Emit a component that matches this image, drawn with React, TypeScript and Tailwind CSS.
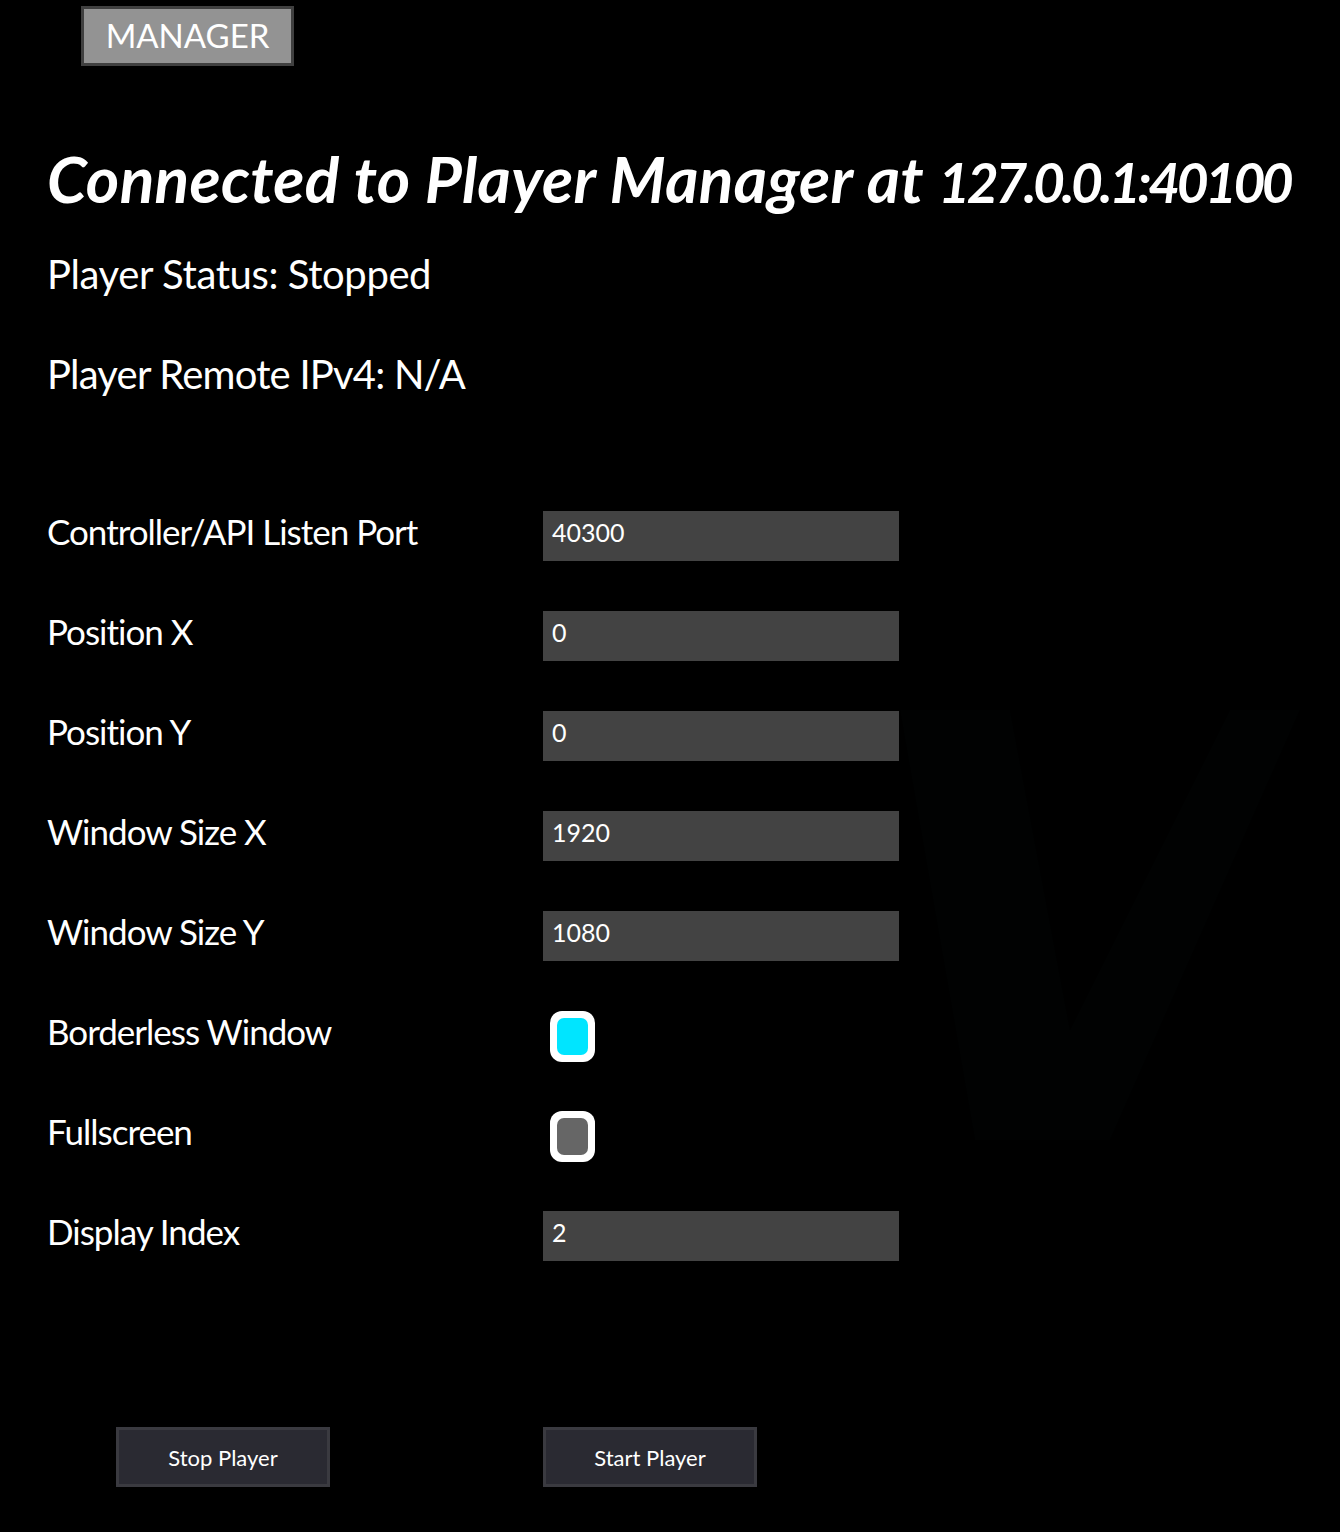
import React from "react";

const FONT = { fontFamily: 'Lato, "Noto Sans", sans-serif' };

function Field({ label, value }: { label: string; value: string }) {
  return (
    <div className="flex items-center h-[50px]">
      <div className="w-[496px] text-[35px] leading-[40px] mb-[10px] tracking-[-1px] text-white">{label}</div>
      <div className="w-[356px] h-[50px] bg-[#434343] flex items-center pl-[9px] pb-[7px] text-[25px] text-white">{value}</div>
    </div>
  );
}

function Check({ label, on }: { label: string; on: boolean }) {
  return (
    <div className="flex items-center h-[50px]">
      <div className="w-[503px] text-[35px] leading-[40px] mb-[10px] tracking-[-1px] text-white">{label}</div>
      <div className="w-[45px] h-[51px] rounded-[12px] bg-white p-[7px]">
        <div className={on ? "w-full h-full rounded-[7px] bg-[#00e5ff]" : "w-full h-full rounded-[7px] bg-[#666666]"} />
      </div>
    </div>
  );
}

export default function App() {
  return (
    <div className="relative w-full min-h-[1532px] bg-black overflow-hidden" style={FONT}>
      <svg className="absolute left-[880px] top-[700px]" width="460" height="460" viewBox="0 0 460 460">
        <polygon points="20,10 130,10 190,330 350,10 420,10 230,440 95,440" fill="#010202" />
      </svg>
      <div className="relative">
        <div className="pt-[6px] pl-[81px]">
          <div className="w-[213px] h-[60px] border-[3px] border-[#404040] bg-[#939393] flex items-center justify-center text-white text-[33px]">
            MANAGER
          </div>
        </div>
        <div className="pl-[47px]">
          <h1 className="mt-[81px] h-[64px] text-[64px] leading-[64px] font-bold italic text-white whitespace-nowrap">
            <span className="tracking-[0.3px]">Connected to Player Manager at </span>
            <span className="text-[55px] leading-[40px] tracking-[-3.5px]">127.0.0.1:40100</span>
          </h1>
          <div className="mt-[41px] text-[40px] leading-[44px] tracking-[-0.4px] text-white">Player Status: Stopped</div>
          <div className="mt-[56px] text-[40px] leading-[44px] tracking-[-0.8px] text-white">Player Remote IPv4: N/A</div>
          <div className="mt-[115px] flex flex-col gap-[50px]">
            <Field label="Controller/API Listen Port" value="40300" />
            <Field label="Position X" value="0" />
            <Field label="Position Y" value="0" />
            <Field label="Window Size X" value="1920" />
            <Field label="Window Size Y" value="1080" />
            <Check label="Borderless Window" on={true} />
            <Check label="Fullscreen" on={false} />
            <Field label="Display Index" value="2" />
          </div>
        </div>
        <div className="flex mt-[166px]">
          <div className="ml-[116px] w-[214px] h-[60px] border-[3px] border-[#3a3a40] bg-[#2a2a32] flex items-center justify-center text-white text-[22px]">
            Stop Player
          </div>
          <div className="ml-[213px] w-[214px] h-[60px] border-[3px] border-[#3a3a40] bg-[#2a2a32] flex items-center justify-center text-white text-[22px]">
            Start Player
          </div>
        </div>
      </div>
    </div>
  );
}
